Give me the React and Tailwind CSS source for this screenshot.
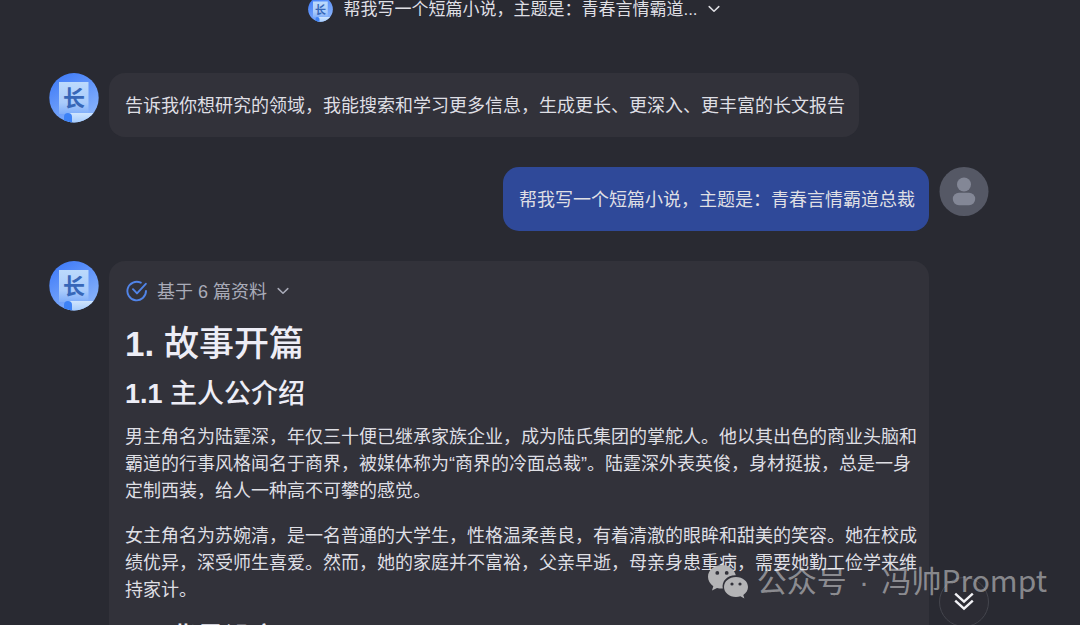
import React from "react";

function BotAvatar({ className, id }) {
  return (
    <svg viewBox="0 0 50 50" className={className} role="img" aria-label="长文助手">
      <defs>
        <linearGradient id={id + "-bg"} x1="0.2" y1="0" x2="0.8" y2="1">
          <stop offset="0" stopColor="#3f7bf8" />
          <stop offset="1" stopColor="#8fb8fb" />
        </linearGradient>
        <linearGradient id={id + "-paper"} x1="0" y1="0" x2="0" y2="1">
          <stop offset="0" stopColor="#bcdafc" />
          <stop offset="0.65" stopColor="#a9cbfb" />
          <stop offset="1" stopColor="#7fadf9" />
        </linearGradient>
        <linearGradient id={id + "-roll"} x1="0" y1="0" x2="0" y2="1">
          <stop offset="0" stopColor="#cfe5fe" />
          <stop offset="1" stopColor="#a5cbfc" />
        </linearGradient>
        <clipPath id={id + "-clip"}>
          <circle cx="25" cy="24.7" r="24.7" />
        </clipPath>
      </defs>
      <g clipPath={`url(#${id}-clip)`}>
        <rect width="50" height="50" fill={`url(#${id}-bg)`} />
        <rect x="10" y="9" width="29.5" height="32" fill={`url(#${id}-paper)`} />
        <path d="M19 40h26v10H19z" fill={`url(#${id}-roll)`} />
        <path d="M15 50v-6a4 4 0 0 1 8 0V50z" fill="#3d82f6" />
      </g>
      <text
        x="25"
        y="33"
        textAnchor="middle"
        fontSize="22"
        fontWeight="700"
        fill="#3767b8"
        className="font-['Noto_Sans_CJK_SC',sans-serif]"
      >
        长
      </text>
    </svg>
  );
}

function UserAvatar() {
  return (
    <svg viewBox="0 0 50 50" className="size-[50px] shrink-0" role="img" aria-label="用户">
      <circle cx="25" cy="24.5" r="24.5" fill="#555865" />
      <circle cx="25" cy="17.5" r="7" fill="#838796" />
      <rect x="13.8" y="25.8" width="22.4" height="12.4" rx="6.2" fill="#838796" />
    </svg>
  );
}

function Chevron() {
  return (
    <svg viewBox="0 0 12 8" className="h-2 w-3" fill="none" stroke="currentColor" strokeWidth="1.5" strokeLinecap="round" strokeLinejoin="round" aria-hidden="true">
      <path d="M1.2 1.6 6 6.2l4.8-4.6" />
    </svg>
  );
}

function CheckIcon() {
  return (
    <svg viewBox="0 0 22 22" className="size-[22px]" fill="none" stroke="#5184e8" strokeWidth="1.9" strokeLinecap="round" strokeLinejoin="round" aria-hidden="true">
      <path d="M15.800 2.700A9.300 9.300 0 1 0 21 11" />
      <path d="M8 9.200l4 4.200L20.800 3.800" />
    </svg>
  );
}

function WechatIcon() {
  return (
    <svg viewBox="0 0 42 36" className="h-9 w-[42px]" aria-hidden="true">
      <path
        fillRule="evenodd"
        fill="#b4b4b6"
        d="M15 1C7 1 1 6.100 1 12.800c0 3.900 2 7.200 5.300 9.400L5 26.400l5-2.500c1.900.5 3.700.8 5.800.7-1.600-7.600 5-13.700 13-13.300C27.500 5.300 22 1 15 1zM10.300 7a1.900 1.900 0 1 1 0 3.800 1.900 1.900 0 0 1 0-3.800zm9.400 0a1.900 1.900 0 1 1 0 3.800 1.900 1.900 0 0 1 0-3.800z"
      />
      <path
        fillRule="evenodd"
        fill="#b4b4b6"
        d="M29 13c-6.800 0-12 4.400-12 10s5.200 10 12 10c1.600 0 3-.3 4.400-.7l4 2.200-1.100-3.600c2.900-1.900 4.700-4.700 4.700-7.900 0-5.600-5.200-10-12-10zM25 18.400a1.600 1.600 0 1 1 0 3.200 1.600 1.600 0 0 1 0-3.200zm8 0a1.600 1.600 0 1 1 0 3.200 1.600 1.600 0 0 1 0-3.200z"
      />
    </svg>
  );
}

export default function App() {
  return (
    <div className="relative h-screen overflow-hidden bg-[#292a32] font-['Liberation_Sans','Noto_Sans_CJK_SC',sans-serif] text-lg text-[#dfdfe4]">
      <header className="flex justify-center pr-[52px]">
        <button type="button" className="-mt-[5px] flex items-center gap-2.5 text-[17px] leading-[26px]">
          <BotAvatar id="head" className="size-[25px]" />
          <span className="pt-0.5">帮我写一个短篇小说，主题是：青春言情霸道...</span>
          <Chevron />
        </button>
      </header>

      <main className="flex flex-col gap-[30px] pt-[50px] pr-[91px] pl-[49px]">
        <div className="flex items-start gap-2.5">
          <BotAvatar id="intro" className="size-[50px] shrink-0" />
          <p className="rounded-2xl bg-[#32323a] pt-[19px] pr-3.5 pb-[17px] pl-4 leading-7">
            告诉我你想研究的领域，我能搜索和学习更多信息，生成更长、更深入、更丰富的长文报告
          </p>
        </div>

        <div className="flex items-start justify-end gap-2.5">
          <p className="rounded-2xl bg-[#2f4999] pt-[19px] pr-3.5 pb-[17px] pl-4 leading-7">
            帮我写一个短篇小说，主题是：青春言情霸道总裁
          </p>
          <UserAvatar />
        </div>

        <div className="flex items-start gap-2.5 pr-[60px]">
          <BotAvatar id="story" className="size-[50px] shrink-0" />
          <article className="min-w-0 flex-1 rounded-2xl bg-[#32323a] pt-4 pr-3 pb-4 pl-4">
            <button type="button" className="flex h-7 items-center gap-2.5 text-[#a9abb8]">
              <CheckIcon />
              <span className="pt-0.5">基于 6 篇资料</span>
              <Chevron />
            </button>
            <h1 className="mt-[17px] text-[35px] leading-[44px] font-medium text-[#ededf6]">
              <span className="font-bold">1. </span>故事开篇
            </h1>
            <h2 className="mt-2.5 text-[27px] leading-9 font-medium text-[#ededf6]">
              <span className="font-bold">1.1 </span>主人公介绍
            </h2>
            <p className="mt-3 leading-[27px]">
              男主角名为陆霆深，年仅三十便已继承家族企业，成为陆氏集团的掌舵人。他以其出色的商业头脑和霸道的行事风格闻名于商界，被媒体称为“商界的冷面总裁”。陆霆深外表英俊，身材挺拔，总是一身定制西装，给人一种高不可攀的感觉。
            </p>
            <p className="mt-[18px] leading-[27px]">
              女主角名为苏婉清，是一名普通的大学生，性格温柔善良，有着清澈的眼眸和甜美的笑容。她在校成绩优异，深受师生喜爱。然而，她的家庭并不富裕，父亲早逝，母亲身患重病，需要她勤工俭学来维持家计。
            </p>
            <h2 className="mt-4 text-[27px] leading-9 font-medium text-[#ededf6]">
              <span className="font-bold">1.2 </span>背景设定
            </h2>
          </article>
        </div>
      </main>

      <button
        type="button"
        aria-label="滚动到底部"
        className="absolute right-[91px] -bottom-0.5 flex size-[50px] items-center justify-center rounded-full border border-[#44454d] bg-[#2c2c34] text-[#f2f2f6]"
      >
        <svg viewBox="0 0 20 20" className="size-5" fill="none" stroke="currentColor" strokeWidth="2.4" aria-hidden="true">
          <path d="M1.200 1.600 10 9.700l8.800-8.100M1.200 8.600 10 16.700l8.800-8.100" />
        </svg>
      </button>

      <div className="pointer-events-none absolute right-[33px] bottom-[18px] flex items-center gap-2 font-['Noto_Sans_CJK_SC',sans-serif] text-[30px] leading-[44px] text-white/45">
        <WechatIcon />
        <span className="pb-[3px]">
          公众号<span className="mx-1 font-['Liberation_Sans',sans-serif]"> · </span>冯帅Prompt
        </span>
      </div>
    </div>
  );
}
